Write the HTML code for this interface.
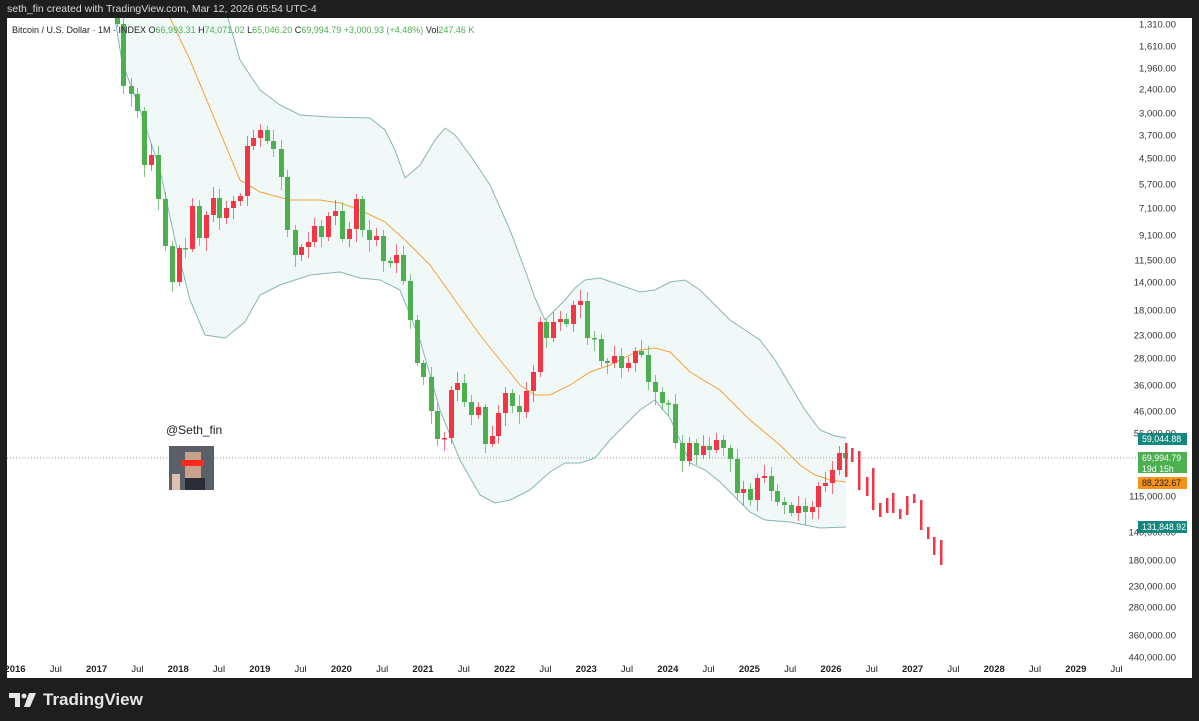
<!DOCTYPE html>
<html><head><meta charset="utf-8"><style>
body{margin:0;background:#1e1e1e;width:1199px;height:721px;overflow:hidden;font-family:"Liberation Sans",sans-serif}
#top{position:absolute;left:7px;top:3px;color:#d8d8d8;font-size:10.5px}
#chart{position:absolute;left:7px;top:18px;width:1185px;height:660px;background:#fff}
#tv{position:absolute;left:9px;top:690px;color:#e6e6e6;font-size:17px;font-weight:bold;display:flex;align-items:center;gap:6px}
</style></head><body>
<div id="top">seth_fin created with TradingView.com, Mar 12, 2026 05:54 UTC-4</div>
<div id="chart"></div>
<svg id="s" width="1199" height="721" style="position:absolute;left:0;top:0"></svg>
<div id="tv"><svg width="28" height="14" viewBox="0 0 28 14"><path d="M0 0h11v14h-5v-9h-6z" fill="#e6e6e6"/><circle cx="15" cy="3" r="2.5" fill="#e6e6e6"/><path d="M20 0h7l-6 14h-6z" fill="#e6e6e6"/></svg>TradingView</div>
<script>
var s=document.getElementById('s'),h='';
h+='<defs><clipPath id="c"><rect x="7" y="18" width="1130" height="640"/></clipPath></defs>';
function P(a){return a.map(function(p){return p[0]+','+p[1]}).join(' ')}
var up=[[228,18],[240,60],[260,90],[280,105],[300,115],[330,117],[370,118],[385,130],[395,150],[405,178],[420,165],[435,140],[445,128],[455,135],[470,155],[490,185],[510,230],[525,270],[535,298],[545,320],[555,310],[565,300],[575,288],[585,280],[600,278],[620,285],[640,292],[655,290],[670,282],[685,280],[700,290],[715,305],[730,320],[745,330],[760,340],[775,360],[790,385],[805,410],[820,430],[835,436],[846,438]];
var lo=[[115,18],[122,62],[140,110],[160,170],[175,240],[190,300],[205,335],[225,338],[245,322],[260,295],[280,285],[310,275],[340,272],[360,278],[380,280],[400,290],[420,340],[440,410],[460,460],[480,495],[495,503],[510,500],[530,490],[550,472],[565,463],[580,463],[595,458],[610,440],[625,425],[640,410],[655,400],[670,418],[690,463],[705,470],[720,482],[735,497],[750,512],[765,520],[790,522],[820,528],[846,527]];
var ma=[[170,18],[190,60],[215,120],[240,180],[260,192],[290,200],[320,200],[340,203],[360,210],[385,222],[405,240],[430,265],[455,300],[480,335],[500,360],[520,385],[535,395],[550,395],[570,385],[590,372],[610,365],[640,350],[655,348],[670,352],[690,372],[720,390],[750,420],[780,445],[800,465],[815,475],[830,480],[846,482]];
h+='<polygon points="'+P(up)+' '+P(lo.slice().reverse())+'" fill="#f1f9f8"/>';
h+='<polyline points="'+P(up)+'" fill="none" stroke="#86b6b3" stroke-width="1"/>';
h+='<polyline points="'+P(lo)+'" fill="none" stroke="#86b6b3" stroke-width="1"/>';
h+='<polyline points="'+P(ma)+'" fill="none" stroke="#f2a33a" stroke-width="1"/>';
h+='<line x1="7" y1="458" x2="1137" y2="458" stroke="#999" stroke-dasharray="1,2"/>';
var c=[[117,18,24],[123,24,86],[131,0,94],[137,0,111],[144,0,165],[151,0,155],[158,0,199],[165,0,246],[172,0,282],[179,0,248],[185,0,249],[192,0,206],[199,0,238],[206,0,215],[213,0,198],[219,0,218],[226,0,208],[233,0,201],[240,0,196],[247,0,146],[253,0,138],[260,0,130],[267,0,141],[273,0,149],[281,0,177],[287,0,230],[295,0,255],[301,0,247],[308,0,242],[314,0,226],[321,0,237],[328,0,216],[335,0,211],[342,0,239],[349,0,229],[356,0,199],[362,0,230],[369,0,240],[376,0,236],[383,0,261],[390,0,263],[396,0,255],[403,0,281],[410,0,320],[417,0,363],[423,0,377],[431,0,411],[437,0,439],[444,0,438],[451,0,390],[457,0,383],[464,0,402],[471,0,415],[478,0,407],[485,0,444],[492,0,436],[498,0,413],[505,0,393],[512,0,406],[519,0,412],[526,0,391],[533,0,372],[540,0,322],[546,0,338],[553,0,322],[560,0,319],[566,0,324],[573,0,305],[580,0,301],[587,0,338],[594,0,339],[601,0,361],[607,0,363],[614,0,356],[621,0,368],[628,0,363],[635,0,351],[641,0,355],[648,0,382],[655,0,392],[662,0,403],[668,0,404],[675,0,443],[682,0,461],[689,0,443],[696,0,455],[703,0,446],[709,0,450],[716,0,440],[723,0,448],[730,0,459],[737,0,493],[743,0,489],[750,0,500],[757,0,478],[764,0,476],[771,0,491],[777,0,502],[784,0,505],[791,0,513],[798,0,506],[805,0,512],[812,0,507],[818,0,486],[825,0,483],[832,0,470],[839,0,453],[845,0,458]];
var prev=18;
c.forEach(function(d,i){var o=d[1]||prev,cl=d[2];prev=cl;var g=cl>=o;var col=g?'#4caf50':'#f23645';
var t=Math.min(o,cl),b=Math.max(o,cl);var e1=3+(i*7)%9,e2=3+(i*5)%11;
h+='<line x1="'+(d[0]+0.5)+'" y1="'+(t-e1)+'" x2="'+(d[0]+0.5)+'" y2="'+(b+e2)+'" stroke="'+col+'" opacity="0.7"/>';
h+='<rect x="'+(d[0]-2)+'" y="'+t+'" width="5" height="'+Math.max(b-t,1.5)+'" fill="'+col+'"/>';});
[[846,443,477],[852,448,462],[859,451,490],[867,477,496],[873,468,510],[880,503,517],[887,498,513],[893,493,513],[900,509,519],[907,496,515],[914,494,503],[921,500,530],[928,527,539],[934,537,555],[941,540,565]].forEach(function(b){h+='<rect x="'+(b[0]-1)+'" y="'+b[1]+'" width="2.5" height="'+(b[2]-b[1])+'" fill="#f23645"/>';});
s.innerHTML='<g clip-path="url(#c)">'+h+'</g>';
var t='';
[['1,310.00',24],['1,610.00',46],['1,960.00',68],['2,400.00',89],['3,000.00',113],['3,700.00',135],['4,500.00',158],['5,700.00',184],['7,100.00',208],['9,100.00',235],['11,500.00',260],['14,000.00',282],['18,000.00',310],['23,000.00',335],['28,000.00',358],['36,000.00',385],['46,000.00',411],['56,000.00',433],['115,000.00',496],['140,000.00',532],['180,000.00',560],['230,000.00',586],['280,000.00',607],['360,000.00',635],['440,000.00',657]].forEach(function(l){t+='<text x="1176" y="'+(l[1]+3.5)+'" text-anchor="end" font-size="9.5" fill="#333">'+l[0]+'</text>';});
function box(y,hh,col,tc,tx){t+='<rect x="1138" y="'+y+'" width="49" height="'+hh+'" fill="'+col+'"/>';tx.forEach(function(s,i){t+='<text x="1142" y="'+(y+9+i*11)+'" font-size="8.8" fill="'+tc+'">'+s+'</text>'})}
box(433,12,'#12877e','#fff',['59,044.88']);box(452,21,'#4caf50','#fff',['69,994.79','19d 15h']);box(477,12,'#f7931a','#222',['88,232.67']);box(521,12,'#12877e','#fff',['131,848.92']);
var yl=['2016','Jul','2017','Jul','2018','Jul','2019','Jul','2020','Jul','2021','Jul','2022','Jul','2023','Jul','2024','Jul','2025','Jul','2026','Jul','2027','Jul','2028','Jul','2029','Jul'];
yl.forEach(function(s,i){var x=15+i*40.8;t+='<text x="'+x+'" y="672" text-anchor="middle" font-size="9.5" fill="#222" '+(s=='Jul'?'':'font-weight="bold"')+'>'+s+'</text>';});
t+='<text x="12" y="33" font-size="9" fill="#222">Bitcoin / U.S. Dollar · 1M · INDEX <tspan>O</tspan><tspan fill="#4caf50">66,993.31</tspan> H<tspan fill="#4caf50">74,071.02</tspan> L<tspan fill="#4caf50">65,046.20</tspan> C<tspan fill="#4caf50">69,994.79 +3,000.93 (+4.48%)</tspan> Vol<tspan fill="#4caf50">247.46 K</tspan></text>';
t+='<text x="166" y="434" font-size="12" fill="#222">@Seth_fin</text>';
t+='<rect x="169" y="446" width="45" height="44" fill="#5a5f6a"/><rect x="185" y="452" width="16" height="30" fill="#c9a08c"/><rect x="182" y="460" width="22" height="6" fill="#ff2a1a"/><rect x="172" y="474" width="8" height="16" fill="#e0c0b0"/><rect x="185" y="478" width="20" height="12" fill="#2a2d36"/>';
s.innerHTML+=t;
</script>
</body></html>
